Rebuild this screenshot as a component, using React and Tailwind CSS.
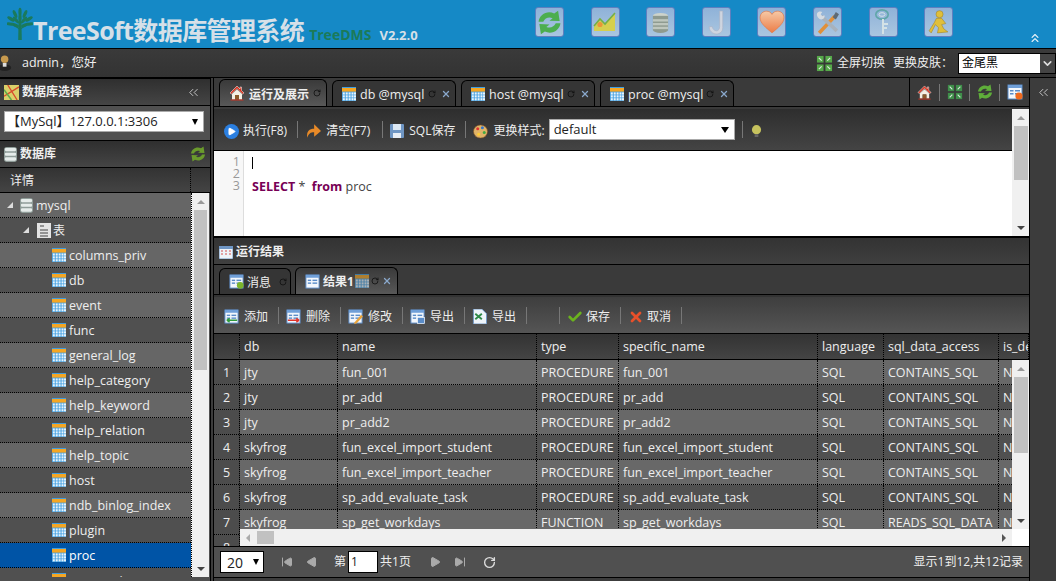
import React from "react";
import { ChevronsLeft, ChevronsUp, ChevronDown, RotateCw, X, SkipBack, SkipForward, Play, Check } from "lucide-react";

const Tbl = ({ c = "" }) => (
  <svg viewBox="0 0 14 14" className={"w-[14px] h-[14px] shrink-0 " + c}>
    <rect x="0" y="0" width="14" height="14" fill="#3f9de0" />
    <rect x="0" y="1" width="14" height="3.6" fill="#f5a623" />
    <g fill="#e8f4fc">
      {[5.4, 8.3, 11.2].map((y) =>
        [0.8, 3.7, 6.6, 9.5, 12].map((x) => <rect key={x + "-" + y} x={x} y={y} width="2" height="2.2" />)
      )}
    </g>
  </svg>
);
const Home = ({ s = 16 }) => (
  <svg viewBox="0 0 16 16" width={s} height={s} className="shrink-0">
    <path d="M8 1 L1 8 L2.5 9 L8 3.6 L13.5 9 L15 8 L12.5 5.5 V2 H11 V4 Z" fill="#d8301c" stroke="#fff" strokeWidth=".5" />
    <path d="M3 9 L8 4.5 L13 9 V14.5 H10 V10 H6 V14.5 H3 Z" fill="#f4efe4" />
    <rect x="6" y="10" width="4" height="4.5" fill="#8b5a2b" />
    <rect x="1.5" y="14.5" width="13" height="1" fill="#c32" />
  </svg>
);
const Db = ({ s = 14 }) => (
  <svg viewBox="0 0 14 16" width={s} height={s + 2} className="shrink-0">
    <rect x="0" y="0" width="14" height="16" rx="3" fill="#8f9c98" />
    <g fill="#e6ecea">
      <rect x="1" y="1" width="12" height="3.4" rx="1.2" />
      <rect x="1" y="6" width="12" height="3.4" rx="1.2" />
      <rect x="1" y="11" width="12" height="3.6" rx="1.2" />
    </g>
  </svg>
);
const Refresh = ({ s = 16, c = "#5fae3a" }) => (
  <svg viewBox="0 0 16 16" width={s} height={s} className="shrink-0" fill={c}>
    <path d="M1 7.5 C1.5 3 6.5 0 11 2.2 L13.5 0.5 L14.5 7 L8 6.8 L10 5.2 C7.5 4.2 5 5.2 4 7.5 Z" />
    <path d="M15 8.5 C14.5 13 9.5 16 5 13.8 L2.5 15.5 L1.5 9 L8 9.2 L6 10.8 C8.5 11.8 11 10.8 12 8.5 Z" />
  </svg>
);
const Expand = ({ s = 18, c = "#56a94a" }) => (
  <svg viewBox="0 0 18 18" width={s} height={s} className="shrink-0" fill={c}>
    <rect x="1" y="1" width="7" height="7" />
    <rect x="10" y="1" width="7" height="7" />
    <rect x="1" y="10" width="7" height="7" />
    <rect x="10" y="10" width="7" height="7" />
    <g stroke="#dfeee0" strokeWidth="1.2">
      <path d="M3 3 L6 6 M15 3 L12 6 M3 15 L6 12 M15 15 L12 12" />
    </g>
  </svg>
);
const Form = ({ badge, s = 15 }) => (
  <svg viewBox="0 0 16 16" width={s} height={s} className="shrink-0">
    <rect x="1" y="1" width="14" height="14" fill="#f3f7fc" stroke="#5a8cc8" />
    <rect x="1" y="1" width="14" height="3" fill="#6f9fd8" />
    <g fill="#5a8cc8">
      <rect x="3" y="6" width="3.5" height="1.5" />
      <rect x="8" y="6" width="5" height="1.5" />
      <rect x="3" y="9" width="3.5" height="1.5" />
      <rect x="8" y="9" width="5" height="1.5" />
    </g>
    {badge === "green" && <circle cx="12" cy="12" r="3.6" fill="#7bb52c" />}
    {badge === "red" && <circle cx="12" cy="12" r="3.6" fill="#ee6a1f" />}
    {badge === "add" && <path d="M3 12 H14 M3 12 L6 10 M3 12 L6 14" stroke="#2f9a3a" strokeWidth="1.6" fill="none" />}
    {badge === "del" && <path d="M2 12 H14 M14 12 L11 10 M14 12 L11 14" stroke="#e0342c" strokeWidth="1.6" fill="none" />}
    {badge === "edit" && <path d="M7 14 L14 6 L16 8 L9 15.5 L6.5 16 Z" fill="#e8a33c" />}
    {badge === "save" && <rect x="8" y="9" width="7.5" height="6.5" fill="#5a8cc8" stroke="#fff" strokeWidth=".7" />}
  </svg>
);
const Sep = () => <span className="w-px h-[17px] bg-[#777] shrink-0" />;

const Tile = ({ children }) => (
  <div className="w-[29px] h-[30px] shrink-0 rounded-[3px] border border-[#5f7fbf] bg-gradient-to-b from-[#8fb2d8] to-[#aac6e0] flex items-center justify-center">{children}</div>
);
const topIcons = [
  <Refresh s={25} c="#4cae4f" />,
  <svg viewBox="0 0 24 22" width="24" height="22"><path d="M1 20 L1 16 L7 9 L12 14 L22 3 L22 20 Z" fill="#d6cf4e" /><path d="M1 15 L7 8 L12 13 L22 2" stroke="#76b041" strokeWidth="1.6" fill="none" /><circle cx="7" cy="13.5" r="2.6" fill="#e8953a" /></svg>,
  <svg viewBox="0 0 20 22" width="19" height="23"><ellipse cx="10" cy="4" rx="8" ry="3" fill="#cdd3cb" /><rect x="2" y="4" width="16" height="15" fill="#8e9a8f" /><ellipse cx="10" cy="19" rx="8" ry="3" fill="#8e9a8f" /><g fill="#bfc7be"><rect x="2" y="7.5" width="16" height="2.5" /><rect x="2" y="11.5" width="16" height="2.5" /><rect x="2" y="15.5" width="16" height="2.5" /></g></svg>,
  <svg viewBox="0 0 20 24" width="21" height="25"><path d="M13 1 H16 V17 C16 21 13 23 10 23 C6 23 3 20 3 16 H6 C6 18 8 20 10 20 C12 20 13 18 13 16 Z" fill="#cfd5e0" stroke="#aab2c6" strokeWidth=".6" /></svg>,
  <svg viewBox="0 0 24 22" width="26" height="24"><defs><linearGradient id="hg" x1="0" y1="0" x2="0" y2="1"><stop offset="0" stopColor="#f6c9a6" /><stop offset="1" stopColor="#ec7c46" /></linearGradient></defs><path d="M12 21 C6 16 1 12 1 7 C1 3 4 1 7 1 C9 1 11 2 12 4 C13 2 15 1 17 1 C20 1 23 3 23 7 C23 12 18 16 12 21 Z" fill="url(#hg)" stroke="#e8743c" strokeWidth=".6" /></svg>,
  <svg viewBox="0 0 24 24" width="25" height="25"><path d="M4 22 L19 6" stroke="#e0903a" strokeWidth="3.4" /><path d="M6 6 L21 20" stroke="#a8b2bc" strokeWidth="3.4" /><path d="M17 7 L20 2 L23 4 L20 9 Z" fill="#5d6a75" /><path d="M2 3 C3 1 6 1 7 2 L5.5 4 L7 6 L9 5 C10 7 8 9 6 9 C4 9 1 6 2 3 Z" fill="#d6dce2" /></svg>,
  <svg viewBox="0 0 16 26" width="16" height="26"><ellipse cx="7" cy="5.5" rx="6.2" ry="4.6" fill="none" stroke="#5fa6a8" strokeWidth="1.6" /><ellipse cx="7" cy="5.5" rx="3" ry="1.8" fill="none" stroke="#d4e2e6" strokeWidth="1" /><path d="M8 10 V25 M8 15 H13 M8 19 H12" stroke="#d4e2e6" strokeWidth="2" /></svg>,
  <svg viewBox="0 0 20 24" width="21" height="25"><circle cx="11" cy="4" r="3.4" fill="#e0bf3a" stroke="#9a7d22" strokeWidth=".5" /><path d="M8 8 L13 8 L17 13 L13 14 L15 18 L19 21 L9 22 L10 17 L7 14 L3 22 L1 20 L6 12 Z" fill="#e0bf3a" stroke="#9a7d22" strokeWidth=".5" /></svg>,
];

const Panel = ({ icon, title, right }) => (
  <div className="h-[28px] flex items-center pl-1 pr-1 shrink-0 border-y border-black bg-gradient-to-b from-[#2f2f2f] to-[#454545] text-[12px] font-bold text-[#eee]">
    {icon}
    <span className="ml-[3px] flex-1">{title}</span>
    {right}
  </div>
);

const MainTab = ({ icon, label, active, close = true, w, size = "text-[12.5px]" }) => (
  <div className={"rounded-t-[6px] border border-black border-b-0 flex items-center pl-[9px] shrink-0 " + w + " " + (active ? "bg-gradient-to-b from-[#3a3a3a] to-[#585858] h-[27px]" : "bg-[#353535] h-[26px]")}>
    {icon}
    <span className={"ml-[4px] pt-[3px] text-[#eee] leading-none whitespace-nowrap " + size}>{label}</span>
    <span className="flex-1" />
    <RotateCw size={8} className="text-[#111] mr-[5px]" strokeWidth={2.5} />
    {close && <X size={10} strokeWidth={3} className="text-[#8aa8cc] mr-[4px]" />}
  </div>
);

const ToolBtn = ({ icon, label, gap = "gap-[4px]", m = "mr-[3px]" }) => (
  <div className={"flex items-center text-[12px] text-[#eee] whitespace-nowrap pt-[3px] " + gap + " " + m}>
    {icon}
    <span>{label}</span>
  </div>
);

const tree = ["columns_priv", "db", "event", "func", "general_log", "help_category", "help_keyword", "help_relation", "help_topic", "host", "ndb_binlog_index", "plugin", "proc", "procs_priv"];

const rows = [
  ["jty", "fun_001", "PROCEDURE", "fun_001", "CONTAINS_SQL"],
  ["jty", "pr_add", "PROCEDURE", "pr_add", "CONTAINS_SQL"],
  ["jty", "pr_add2", "PROCEDURE", "pr_add2", "CONTAINS_SQL"],
  ["skyfrog", "fun_excel_import_student", "PROCEDURE", "fun_excel_import_student", "CONTAINS_SQL"],
  ["skyfrog", "fun_excel_import_teacher", "PROCEDURE", "fun_excel_import_teacher", "CONTAINS_SQL"],
  ["skyfrog", "sp_add_evaluate_task", "PROCEDURE", "sp_add_evaluate_task", "CONTAINS_SQL"],
  ["skyfrog", "sp_get_workdays", "FUNCTION", "sp_get_workdays", "READS_SQL_DATA"],
];
const cols = "grid grid-cols-[98px_199px_82px_199px_66px_115px_1fr]";
const cell = "border-r border-dotted border-black pl-[4px] pt-[2px] overflow-hidden whitespace-nowrap flex items-center";

const ScrollUp = () => <span className="w-0 h-0 border-x-[4px] border-x-transparent border-b-[4px] border-b-[#999]" />;
const ScrollDown = () => <span className="w-0 h-0 border-x-[4px] border-x-transparent border-t-[4px] border-t-[#444]" />;

const leaves = [[13, 5, 0], [8, 7, -25], [18, 7, 25], [4, 12, -60], [22, 12, 60], [9, 13, -40], [17, 13, 40], [3, 17, -85], [23, 17, 85], [8, 18, -70], [18, 18, 70], [13, 11, 0]];

export default function App() {
  return (
    <div className="w-screen h-screen overflow-hidden flex flex-col bg-[#3c3c3c] text-[#eee] font-['Open_Sans','Noto_Sans_CJK_SC',sans-serif] text-[12.5px]">
      {/* header */}
      <div className="h-[48px] shrink-0 bg-[#1589c6] flex items-start relative">
        <svg viewBox="0 0 26 33" className="w-[26px] h-[33px] ml-[7px] mt-[7px] shrink-0">
          <g fill="#1a7a5c">
            <path d="M11.6 14 H14.4 L14.8 33 H11.2 Z" />
            {leaves.map(([x, y, r], i) => (
              <ellipse key={i} cx={x} cy={y} rx="1.6" ry="4.2" transform={`rotate(${r} ${x} ${y})`} />
            ))}
            <path d="M13 22 L6 18 M13 22 L20 18" stroke="#1a7a5c" strokeWidth="1.4" />
          </g>
        </svg>
        <div className="ml-0 mt-[12px] flex items-baseline whitespace-nowrap w-[502px]">
          <span className="text-[25px] leading-[36px] font-bold text-[#d6e0e8] tracking-[-0.6px]">TreeSoft数据库管理系统</span>
          <span className="ml-[5px] text-[14px] font-bold text-[#1c7a58]">TreeDMS</span>
          <span className="ml-[8px] text-[13px] font-bold text-[#d6e0e8]">V2.2.0</span>
        </div>
        <div className="flex gap-[26.6px] mt-[7px]">
          {topIcons.map((ic, i) => <Tile key={i}>{ic}</Tile>)}
        </div>
        <ChevronsUp size={14} className="absolute right-[14px] bottom-[3px] text-[#e8f2f8]" />
      </div>

      {/* top bar */}
      <div className="h-[29px] shrink-0 border-t border-black bg-gradient-to-b from-[#3a3a3a] to-[#333] flex items-center">
        <svg viewBox="0 0 14 18" className="w-[13px] h-[18px] shrink-0"><circle cx="5" cy="5" r="4" fill="#c79a4e" /><ellipse cx="5" cy="14" rx="7" ry="3.5" fill="#222" /><rect x="3" y="9" width="4" height="4" fill="#ddd" /></svg>
        <span className="ml-[9px] text-[12.5px] text-[#eee]">admin，您好</span>
        <span className="flex-1" />
        <Expand s={17} />
        <span className="ml-[4px] text-[12px]">全屏切换</span>
        <span className="ml-[8px] text-[12px]">更换皮肤：</span>
        <div className="ml-[5px] w-[98px] h-[21px] bg-white flex items-center border border-black">
          <span className="flex-1 pl-[3px] text-[12px] text-black">金尾黑</span>
          <span className="w-[15px] h-full bg-[#444] flex items-center justify-center"><ChevronDown size={13} strokeWidth={3} className="text-[#ddd]" /></span>
        </div>
      </div>

      <div className="flex-1 flex min-h-0 border-t border-black">
        {/* sidebar */}
        <div className="w-[211px] shrink-0 flex flex-col border-r border-black bg-[#505050] pb-[4px]">
          <Panel
            icon={<svg viewBox="0 0 16 16" width="15" height="15" className="shrink-0"><rect width="16" height="16" fill="#d9d06a" /><path d="M0 12 L16 2 M4 0 L14 16" stroke="#d84a2c" strokeWidth="1.4" /><path d="M0 5 L8 16" stroke="#5faa4a" strokeWidth="1.6" /></svg>}
            title="数据库选择"
            right={<ChevronsLeft size={15} strokeWidth={1.5} className="text-[#ccc] mr-[5px]" />}
          />
          <div className="h-[34px] flex items-start pt-[5px] px-1 bg-[#505050] shrink-0">
            <div className="w-[200px] h-[21px] bg-white border border-[#aaa] flex items-center text-[#222] text-[13px] pl-[2px]">
              <span className="flex-1">【MySql】127.0.0.1:3306</span>
              <span className="w-0 h-0 mr-[5px] border-x-[3px] border-x-transparent border-t-[6px] border-t-black" />
            </div>
          </div>
          <Panel icon={<Db s={13} />} title="数据库" right={<Refresh s={16} c="#6a9a2c" />} />
          <div className="h-[25px] shrink-0 flex border-b border-black bg-gradient-to-b from-[#333] to-[#444]">
            <div className="w-[191px] pl-[10px] pt-[2px] flex items-center text-[12px] border-r border-dotted border-black">详情</div>
            <div className="flex-1" />
          </div>
          <div className="flex-1 min-h-0 flex">
            <div className="w-[191px] overflow-hidden">
              <div className="h-[25px] flex items-center border-b border-dotted border-black bg-[#666] pl-[7px]">
                <span className="w-0 h-0 border-l-[6px] border-l-transparent border-b-[6px] border-b-[#ddd]" />
                <span className="ml-[7px]"><Db s={13} /></span>
                <span className="ml-[3px] pt-[2px]">mysql</span>
              </div>
              <div className="h-[25px] flex items-center border-b border-dotted border-black bg-[#505050] pl-[23px]">
                <span className="w-0 h-0 border-l-[6px] border-l-transparent border-b-[6px] border-b-[#ddd]" />
                <svg viewBox="0 0 14 15" className="w-[14px] h-[15px] ml-[8px] shrink-0"><rect width="14" height="15" fill="#e4e4e4" /><path d="M3 3 H7 M3 7 H11 M3 10 H11 M3 13 H11" stroke="#444" strokeWidth="1" /></svg>
                <span className="ml-[2px] pt-[2px] text-[12px]">表</span>
              </div>
              {tree.map((t, i) => (
                <div key={t} className={"h-[25px] flex items-center border-b border-dotted border-black pl-[52px] " + (t === "proc" ? "bg-[#0054a6] text-white" : i % 2 === 0 ? "bg-[#666]" : "bg-[#505050]")}>
                  <Tbl />
                  <span className="ml-[3px] pt-[2px] whitespace-nowrap">{t}</span>
                </div>
              ))}
            </div>
            <div className="w-[18px] border-l border-dotted border-black bg-[#f0f0f0] flex flex-col items-center shrink-0">
              <div className="h-[17px] flex items-center justify-center"><ScrollUp /></div>
              <div className="w-[13px] h-[160px] bg-[#c1c1c1]" />
              <div className="flex-1" />
              <div className="h-[17px] flex items-center justify-center"><ScrollDown /></div>
            </div>
          </div>
        </div>

        {/* main */}
        <div className="w-[817px] ml-[2px] shrink-0 flex flex-col border-x border-black">
          {/* tabs */}
          <div className="h-[29px] shrink-0 flex items-end pl-[5px] gap-[5px] border-b border-black bg-[#3a3a3a]">
            <MainTab w="w-[108px]" active close={false} icon={<Home s={16} />} label="运行及展示" size="text-[12px] font-bold" />
            <MainTab w="w-[124px]" icon={<Tbl />} label="db @mysql" />
            <MainTab w="w-[134px]" icon={<Tbl />} label="host @mysql" />
            <MainTab w="w-[134px]" icon={<Tbl />} label="proc @mysql" />
            <span className="flex-1" />
            <div className="flex items-center h-full border-l border-black">
              <div className="w-[29px] flex justify-center"><Home s={15} /></div><Sep />
              <div className="w-[29px] flex justify-center"><Expand s={16} c="#3f8f4a" /></div><Sep />
              <div className="w-[29px] flex justify-center"><Refresh s={16} /></div><Sep />
              <div className="w-[29px] flex justify-center"><Form badge="red" s={16} /></div>
            </div>
          </div>
          {/* editor panel */}
          <div className="h-[131px] shrink-0 flex border-t-2 border-t-[#3a3a3a] border-b-2 border-b-black">
            <div className="flex-1 flex flex-col min-w-0">
              <div className="h-[42px] shrink-0 pl-[10px] flex items-center gap-[7px] bg-gradient-to-b from-[#2e2e2e] to-[#444] border-b border-black">
                <ToolBtn icon={<Play size={15} className="rounded-full bg-[#2b7fe0] text-white p-[3px]" fill="white" />} label="执行(F8)" />
                <Sep />
                <ToolBtn gap="gap-[5px]" m="mr-[5px]" icon={<svg viewBox="0 0 14 14" width="16" height="16"><path d="M2 13 C1 7 4 5 8 5 V1 L14 7 L8 12 V8 C5 8 3 9 2 13 Z" fill="#e88a28" /></svg>} label="清空(F7)" />
                <Sep />
                <ToolBtn gap="gap-[5px]" icon={<svg viewBox="0 0 14 14" width="14" height="14"><rect width="14" height="14" rx="1" fill="#6f96c4" /><rect x="3" y="0" width="8" height="6" fill="#dce8f4" /><rect x="3" y="9" width="8" height="5" fill="#e8eef6" /></svg>} label="SQL保存" />
                <Sep />
                <ToolBtn m="mr-0" gap="gap-[5px]" icon={<svg viewBox="0 0 16 16" width="15" height="15"><ellipse cx="8" cy="8" rx="7.5" ry="7" fill="#e0b468" stroke="#7a4a20" strokeWidth=".6" /><circle cx="5" cy="5" r="1.6" fill="#d33" /><circle cx="10" cy="4" r="1.6" fill="#37c" /><circle cx="12" cy="9" r="1.6" fill="#4a4" /><circle cx="6" cy="11" r="1.6" fill="#fc3" /></svg>} label="更换样式:" />
                <div className="ml-[-3px] w-[186px] h-[21px] bg-white border border-[#aaa] flex items-center pl-[4px] text-[13px] text-[#222]">
                  <span className="flex-1">default</span>
                  <span className="w-0 h-0 mr-[5px] border-x-[4px] border-x-transparent border-t-[6px] border-t-black" />
                </div>
                <Sep />
                <svg viewBox="0 0 12 16" width="11" height="15" className="ml-[1px] mt-[3px]"><circle cx="6" cy="6" r="5" fill="#c6c25e" /><rect x="4" y="11" width="4" height="3" fill="#666" /></svg>
              </div>
              <div className="flex-1 flex bg-white min-h-0 text-[12.5px]">
                <div className="w-[30px] bg-[#f7f7f7] border-r border-[#ddd] text-right pr-[3px] pt-[5px] text-[#999] leading-[12px]">
                  <div>1</div><div>2</div><div>3</div>
                </div>
                <div className="pl-[8px] pt-[6px] leading-[12px]">
                  <div className="h-[12px] w-px bg-black" />
                  <div className="h-[12px]" />
                  <div className="text-[#444] whitespace-pre"><span className="font-bold text-[#770055]">SELECT</span> *  <span className="font-bold text-[#770055]">from</span> proc</div>
                </div>
              </div>
            </div>
            <div className="w-[17px] bg-[#f0f0f0] flex flex-col items-center shrink-0">
              <div className="h-[17px] flex items-center justify-center"><ScrollUp /></div>
              <div className="w-[14px] h-[54px] bg-[#c1c1c1]" />
              <div className="flex-1" />
              <div className="h-[17px] flex items-center justify-center"><ScrollDown /></div>
            </div>
          </div>
          {/* result title */}
          <div className="h-[27px] shrink-0 flex items-center pl-[5px] gap-[3px] pt-[2px] bg-gradient-to-b from-[#333] to-[#3f3f3f] border-b border-black text-[12px] font-bold">
            <svg viewBox="0 0 14 13" width="14" height="13"><rect width="14" height="13" rx="1" fill="#eef3f8" stroke="#6f96c4" /><rect width="14" height="3" fill="#6f96c4" /><path d="M2 5 H4 M6 5 H8 M10 5 H12 M2 8 H4 M6 8 H8 M10 8 H12" stroke="#d88" strokeWidth="1.6" /></svg>
            运行结果
          </div>
          {/* result tabs */}
          <div className="h-[30px] shrink-0 flex items-end pl-[5px] gap-[4px] border-b border-black bg-[#3a3a3a]">
            <div className="h-[26px] w-[72px] rounded-t-[6px] border border-black border-b-0 bg-[#353535] flex items-center pl-[9px] gap-[3px]">
              <Form badge="green" />
              <span className="text-[12px] pt-[2px]">消息</span>
              <RotateCw size={8} strokeWidth={2.5} className="text-[#111] ml-[5px]" />
            </div>
            <div className="h-[27px] w-[103px] rounded-t-[6px] border border-black border-b-0 bg-gradient-to-b from-[#3a3a3a] to-[#585858] flex items-center pl-[9px]">
              <Form />
              <span className="ml-[3px] pt-[2px] text-[12px] font-bold">结果1</span>
              <span className="ml-px"><Tbl c="opacity-60" /></span>
              <RotateCw size={8} strokeWidth={2.5} className="text-[#111] ml-[2px]" />
              <X size={10} strokeWidth={3} className="text-[#8aa8cc] ml-[3px]" />
            </div>
          </div>
          {/* data toolbar */}
          <div className="h-[39px] shrink-0 flex items-center pl-[10px] gap-[7px] bg-gradient-to-b from-[#3e3e3e] to-[#555] border-t-2 border-t-[#333] border-b border-b-black">
            <ToolBtn gap="gap-[5px]" icon={<Form badge="add" />} label="添加" /><Sep />
            <ToolBtn gap="gap-[5px]" icon={<Form badge="del" />} label="删除" /><Sep />
            <ToolBtn gap="gap-[5px]" icon={<Form badge="edit" />} label="修改" /><Sep />
            <ToolBtn gap="gap-[5px]" icon={<Form badge="save" />} label="导出" /><Sep />
            <ToolBtn gap="gap-[5px]" icon={<svg viewBox="0 0 15 16" width="15" height="15"><path d="M1 0 H10 L15 5 V16 H1 Z" fill="#eef4fa" stroke="#6f96c4" /><path d="M3 5 L10 11 M10 5 L3 11" stroke="#2f8a4a" strokeWidth="2" /></svg>} label="导出" /><Sep />
            <span className="w-[18px]" /><Sep />
            <ToolBtn gap="gap-[3px]" icon={<Check size={16} strokeWidth={4} className="text-[#6bb31e]" />} label="保存" /><Sep />
            <ToolBtn gap="gap-[3px]" icon={<X size={16} strokeWidth={4} className="text-[#e8502a]" />} label="取消" /><Sep />
          </div>
          {/* table */}
          <div className="flex-1 min-h-0 flex">
            <div className="w-[26px] shrink-0 border-r border-dotted border-black flex flex-col overflow-hidden">
              <div className="h-[26px] shrink-0 bg-gradient-to-b from-[#333] to-[#444] border-b border-black" />
              {[1, 2, 3, 4, 5, 6, 7, 8].map((n) => (
                <div key={n} className="h-[25px] shrink-0 flex items-center justify-center pt-[2px] border-b border-dotted border-black bg-[#4c4c4c] text-[#eee]">{n}</div>
              ))}
            </div>
            <div className="flex-1 min-w-0 flex flex-col">
              <div className={cols + " h-[26px] shrink-0 bg-gradient-to-b from-[#333] to-[#444] border-b border-black"}>
                {["db", "name", "type", "specific_name", "language", "sql_data_access", "is_de"].map((h) => (
                  <div key={h} className={cell}>{h}</div>
                ))}
              </div>
              <div className="flex-1 min-h-0 flex">
                <div className="flex-1 min-w-0 overflow-hidden">
                  {rows.map((r, i) => (
                    <div key={i} className={cols + " h-[25px] border-b border-dotted border-black " + (i % 2 === 0 ? "bg-[#686868]" : "bg-[#505050]")}>
                      <div className={cell}>{r[0]}</div>
                      <div className={cell}>{r[1]}</div>
                      <div className={cell}>{r[2]}</div>
                      <div className={cell}>{r[3]}</div>
                      <div className={cell}>SQL</div>
                      <div className={cell}>{r[4]}</div>
                      <div className={cell + " border-r-0"}>N</div>
                    </div>
                  ))}
                </div>
                <div className="w-[17px] bg-[#f0f0f0] flex flex-col items-center shrink-0">
                  <div className="h-[17px] flex items-center justify-center"><ScrollUp /></div>
                  <div className="w-[14px] h-[76px] bg-[#c1c1c1]" />
                  <div className="flex-1" />
                  <div className="h-[17px] flex items-center justify-center"><ScrollDown /></div>
                </div>
              </div>
              <div className="h-[17px] shrink-0 flex">
                <div className="flex-1 bg-[#f0f0f0] flex items-center">
                  <span className="ml-[6px] w-0 h-0 border-y-[4px] border-y-transparent border-r-[4px] border-r-[#aaa]" />
                  <span className="ml-[7px] w-[17px] h-[13px] bg-[#c1c1c1]" />
                  <span className="flex-1" />
                  <span className="mr-[6px] w-0 h-0 border-y-[4px] border-y-transparent border-l-[4px] border-l-[#555]" />
                </div>
                <div className="w-[17px] bg-white" />
              </div>
            </div>
          </div>
          {/* pager */}
          <div className="h-[32px] shrink-0 flex items-center pl-[6px] pr-[6px] bg-[#505050] border-y border-black mb-[3px]">
            <div className="w-[44px] h-[22px] bg-white border border-black flex items-center pl-[6px] text-[#222] text-[14px]">
              <span className="flex-1">20</span>
              <span className="w-0 h-0 mr-[4px] border-x-[3px] border-x-transparent border-t-[6px] border-t-black" />
            </div>
            <span className="ml-[8px]"><Sep /></span>
            <SkipBack size={12} fill="#aaa" className="text-[#aaa] ml-[9px]" />
            <Play size={12} fill="#aaa" className="text-[#aaa] ml-[13px] rotate-180" />
            <span className="ml-[9px]"><Sep /></span>
            <span className="ml-[7px] text-[12px]">第</span>
            <div className="ml-[2px] w-[30px] h-[22px] bg-white border border-black text-[#222] text-[12px] pl-[2px] flex items-center">1</div>
            <span className="ml-[2px] text-[12px]">共1页</span>
            <span className="ml-[9px]"><Sep /></span>
            <Play size={12} fill="#aaa" className="text-[#aaa] ml-[9px]" />
            <SkipForward size={12} fill="#aaa" className="text-[#aaa] ml-[13px]" />
            <span className="ml-[9px]"><Sep /></span>
            <RotateCw size={13} strokeWidth={2.5} className="text-[#ddd] ml-[8px]" />
            <span className="flex-1" />
            <span className="text-[12px]">显示1到12,共12记录</span>
          </div>
        </div>

        {/* right collapse */}
        <div className="flex-1 flex justify-center pt-[7px]">
          <ChevronsLeft size={15} strokeWidth={1.5} className="text-[#ccc]" />
        </div>
      </div>
    </div>
  );
}
